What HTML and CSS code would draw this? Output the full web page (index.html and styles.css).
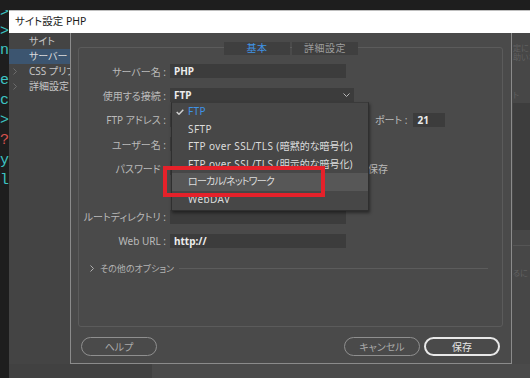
FILE: index.html
```html
<!DOCTYPE html>
<html lang="ja">
<head>
<meta charset="utf-8">
<title>サイト設定 PHP</title>
<link rel="stylesheet" href="styles.css">
</head>
<body>
<div class="screen">
  <div class="topbar"></div>
  <div class="main">
    <div class="code">
      <div class="code-a">
        <div class="cl cy">&gt;</div>
        <div class="cl cy">l&gt;</div>
        <div class="cl cy">n</div>
      </div>
      <div class="code-b">
        <div class="cl cy">e</div>
        <div class="cl cy">nc</div>
        <div class="cl"> </div>
        <div class="cl cy">&gt;</div>
        <div class="cl rd">t?</div>
        <div class="cl cy">ly</div>
        <div class="cl cy">al</div>
      </div>
    </div>
    <div class="dialog">
      <div class="titlebar">サイト設定 PHP</div>
      <div class="dbody">
        <nav class="sidebar">
          <div class="nav-item">サイト</div>
          <div class="nav-item active">サーバー</div>
          <div class="nav-item"><svg class="chev" width="4" height="7" viewBox="0 0 4 7"><polyline points="0.5,0.5 3.5,3.5 0.5,6.5" fill="none" stroke="#6c6c6c" stroke-width="1"/></svg>CSS プリプロセッサー</div>
          <div class="nav-item"><svg class="chev" width="4" height="7" viewBox="0 0 4 7"><polyline points="0.5,0.5 3.5,3.5 0.5,6.5" fill="none" stroke="#6c6c6c" stroke-width="1"/></svg>詳細設定</div>
        </nav>
        <section class="panel">
          <div class="group">
            <div class="tabs">
              <div class="tab active">基本</div>
              <div class="tab">詳細設定</div>
            </div>
            <div class="form">
              <div class="row">
                <label class="lbl">サーバー名 :</label>
                <div class="field w176">PHP</div>
              </div>
              <div class="row">
                <label class="lbl">使用する接続 :</label>
                <div class="field select w184">FTP
                  <svg class="caret" width="7" height="4" viewBox="0 0 7 4"><polyline points="0.5,0.5 3.5,3.5 6.5,0.5" fill="none" stroke="#b8b8b8" stroke-width="1"/></svg>
                  <div class="menu">
                    <div class="mi sel"><svg class="check" width="8" height="6" viewBox="0 0 8 6"><polyline points="0.7,3 3,5.2 7.3,0.7" fill="none" stroke="#cfcfcf" stroke-width="1.5"/></svg><span class="lat">FTP</span></div>
                    <div class="mi"><span class="lat">SFTP</span></div>
                    <div class="mi"><span class="lat">FTP over SSL/TLS (</span>暗黙的な暗号化)</div>
                    <div class="mi"><span class="lat">FTP over SSL/TLS (</span>明示的な暗号化)</div>
                    <div class="mi hl"><span class="kana">ローカル/ネットワーク</span></div>
                    <div class="mi"><span class="lat">WebDAV</span></div>
                  </div>
                </div>
              </div>
              <div class="row">
                <label class="lbl">FTP アドレス :</label>
                <div class="field w190"></div>
                <label class="lbl-inline">ポート :</label>
                <div class="field w32">21</div>
              </div>
              <div class="row">
                <label class="lbl">ユーザー名 :</label>
                <div class="field w176"></div>
              </div>
              <div class="row">
                <label class="lbl">パスワード :</label>
                <div class="field w176"></div>
                <span class="checkbox"></span>
                <span class="chk-label">保存</span>
              </div>
              <div class="row"></div>
              <div class="row">
                <label class="lbl">ルートディレクトリ :</label>
                <div class="field w176"></div>
              </div>
              <div class="row">
                <label class="lbl">Web URL :</label>
                <div class="field w176">http://</div>
              </div>
            </div>
            <div class="more">
              <svg class="more-chev" width="4" height="7" viewBox="0 0 4 7"><polyline points="0.5,0.5 3.5,3.5 0.5,6.5" fill="none" stroke="#b0b0b0" stroke-width="1"/></svg>
              <span class="more-text">その他のオプション</span>
              <span class="more-line"></span>
            </div>
          </div>
          <div class="buttons">
            <button class="btn">ヘルプ</button>
            <span class="spacer"></span>
            <button class="btn">キャンセル</button>
            <button class="btn primary">保存</button>
          </div>
        </section>
        <div class="behind">
          <div class="b1">定に<br>助いさ</div>
          <div class="b3">ト</div>
          <div class="brect"></div>
          <div class="bline"></div>
          <div class="b4">るに</div>
        </div>
      </div>
      <div class="bottom"><div class="bottom-l"></div><div class="bottom-r"></div></div>
    </div>
  </div>
  <div class="annot"></div>
</div>
</body>
</html>
```
FILE: styles.css
```css
* { box-sizing: border-box; margin: 0; padding: 0; }
html, body { width: 530px; height: 378px; overflow: hidden; background: #1e1e1e; }
body {
  font-family: "Noto Sans", "Noto Sans CJK JP", sans-serif;
  font-size: 10px;
  font-feature-settings: "palt";
  color: #bdbdbd;
}
.screen { position: relative; width: 530px; height: 378px; display: flex; flex-direction: column; }
.topbar { height: 10px; background: #1e1e1e; flex: none; }
.main { flex: 1; display: flex; min-height: 0; }

/* code editor strip */
.code { width: 9px; flex: none; background: #1e1e1e; overflow: hidden;
  font-family: "Liberation Mono", monospace; font-size: 15px; font-feature-settings: normal; }
.code-a { margin-top: -7px; line-height: 19px; }
.code-b { margin-top: 11px; line-height: 20px; }
.cl { display: flex; justify-content: flex-end; white-space: pre; }
.cy { color: #3cc3c3; }
.rd { color: #d9534f; }

/* dialog */
.dialog { flex: 1; display: flex; flex-direction: column; min-width: 0; }
.titlebar { height: 23px; flex: none; background: #ffffff; border-top: 1px solid #bfbfbf;
  color: #1b1b1b; font-size: 10.5px; line-height: 21px; padding-left: 6px; }
.dbody { height: 331px; flex: none; display: flex; }

.sidebar { width: 61px; flex: none; background: #444444; overflow: hidden; padding-top: 1px; }
.nav-item { height: 15px; line-height: 15px; padding-left: 20px; white-space: nowrap;
  color: #c6c6c6; position: relative; }
.nav-item.active { background: #3c5570; color: #dcdcdc; }
.chev { position: absolute; left: 4px; top: 4px; }

.panel { width: 442px; flex: none; background: #4a4a4a;
  border: 1px solid #8b8b8b; border-top: none;
  display: flex; flex-direction: column; padding: 14px 8px 0 7px; }
.group { height: 280px; flex: none; border: 1px solid #5b5b5b; border-radius: 3px; }
.tabs { display: flex; justify-content: center; gap: 2px; margin-top: -6px; height: 13px; padding-left: 1px; }
.tab { width: 66px; height: 13px; line-height: 13px; text-align: center; background: #3f3f3f;
  color: #9d9d9d; font-size: 10px; letter-spacing: 0.5px; }
.tab.active { color: #3f93e6; }

.form { margin-top: 4px; display: grid; grid-auto-rows: 24.3px; }
.row { display: flex; align-items: center; }
.lbl { width: 87px; flex: none; text-align: right; margin-right: 4px; color: #bababa; white-space: pre; }
.lbl-inline { margin-left: 15px; margin-right: 6px; color: #bababa; white-space: pre; }
.field { height: 14px; line-height: 14px; background: #3c3c3c; color: #ececec; font-weight: 700;
  padding-left: 4px; flex: none; position: relative; }
.w176 { width: 176px; }
.w184 { width: 184px; }
.w190 { width: 190px; }
.w32 { width: 32px; }
.caret { position: absolute; right: 4px; top: 5px; }

.menu { position: absolute; left: 1px; top: 14px; width: 198px; z-index: 5;
  background: #474747; border: 1px solid #2f2f2f; border-top-color: #3a3a3a;
  box-shadow: 1px 2px 3px rgba(0,0,0,0.45);
  padding: 0 0 2px 0; font-weight: 400; }
.mi { height: 17.5px; line-height: 17.5px; padding-left: 16px; color: #dcdcdc; white-space: nowrap; position: relative; }
.mi.sel { color: #3f93e6; }
.mi.hl { background: #575757; }
.lat { letter-spacing: 0.4px; }
.kana { letter-spacing: -0.8px; }
.check { position: absolute; left: 4px; top: 6px; }

.checkbox { width: 10px; height: 10px; margin-left: 6px; border: 1px solid #888; flex: none; }
.chk-label { margin-left: 6px; color: #bababa; }

.more { margin-top: 7px; height: 16px; display: flex; align-items: center; padding-left: 11px; padding-right: 14px; }
.more-chev { flex: none; }
.more-text { margin-left: 6px; color: #b3b3b3; white-space: nowrap; font-size: 9px; }
.more-line { flex: 1; height: 1px; background: #5c5c5c; margin-left: 5px; }

.buttons { display: flex; align-items: center; margin-top: 10px; padding: 0 3px 0 3px; gap: 4px; }
.spacer { flex: 1; }
.btn { width: 76px; height: 19px; border-radius: 10px; background: transparent;
  border: 1px solid #8f8f8f; color: #a9a9a9; font: inherit; font-size: 10px; }
.btn.primary { border: 2px solid #e8e8e8; color: #e6e6e6; }

.behind { flex: 1; background: #474747; overflow: hidden; color: #616161; white-space: nowrap;
  padding-left: 1px; font-size: 8px; }
.b1 { margin-top: 10px; line-height: 9px; }
.b3 { margin-top: 29px; line-height: 10px; }
.brect { margin-top: 3px; height: 127px; background: #3d3d3d; }
.bline { margin-top: 15px; height: 1px; background: #555555; }
.b4 { margin-top: 22px; line-height: 10px; }

.bottom { flex: 1; display: flex; }
.bottom-l { width: 143px; background: #414141; }
.bottom-r { flex: 1; background: #4a4a4a; }

.annot { position: absolute; left: 163px; top: 166px; width: 162px; height: 31px;
  border: 4px solid #e5212a; z-index: 10; }
```
